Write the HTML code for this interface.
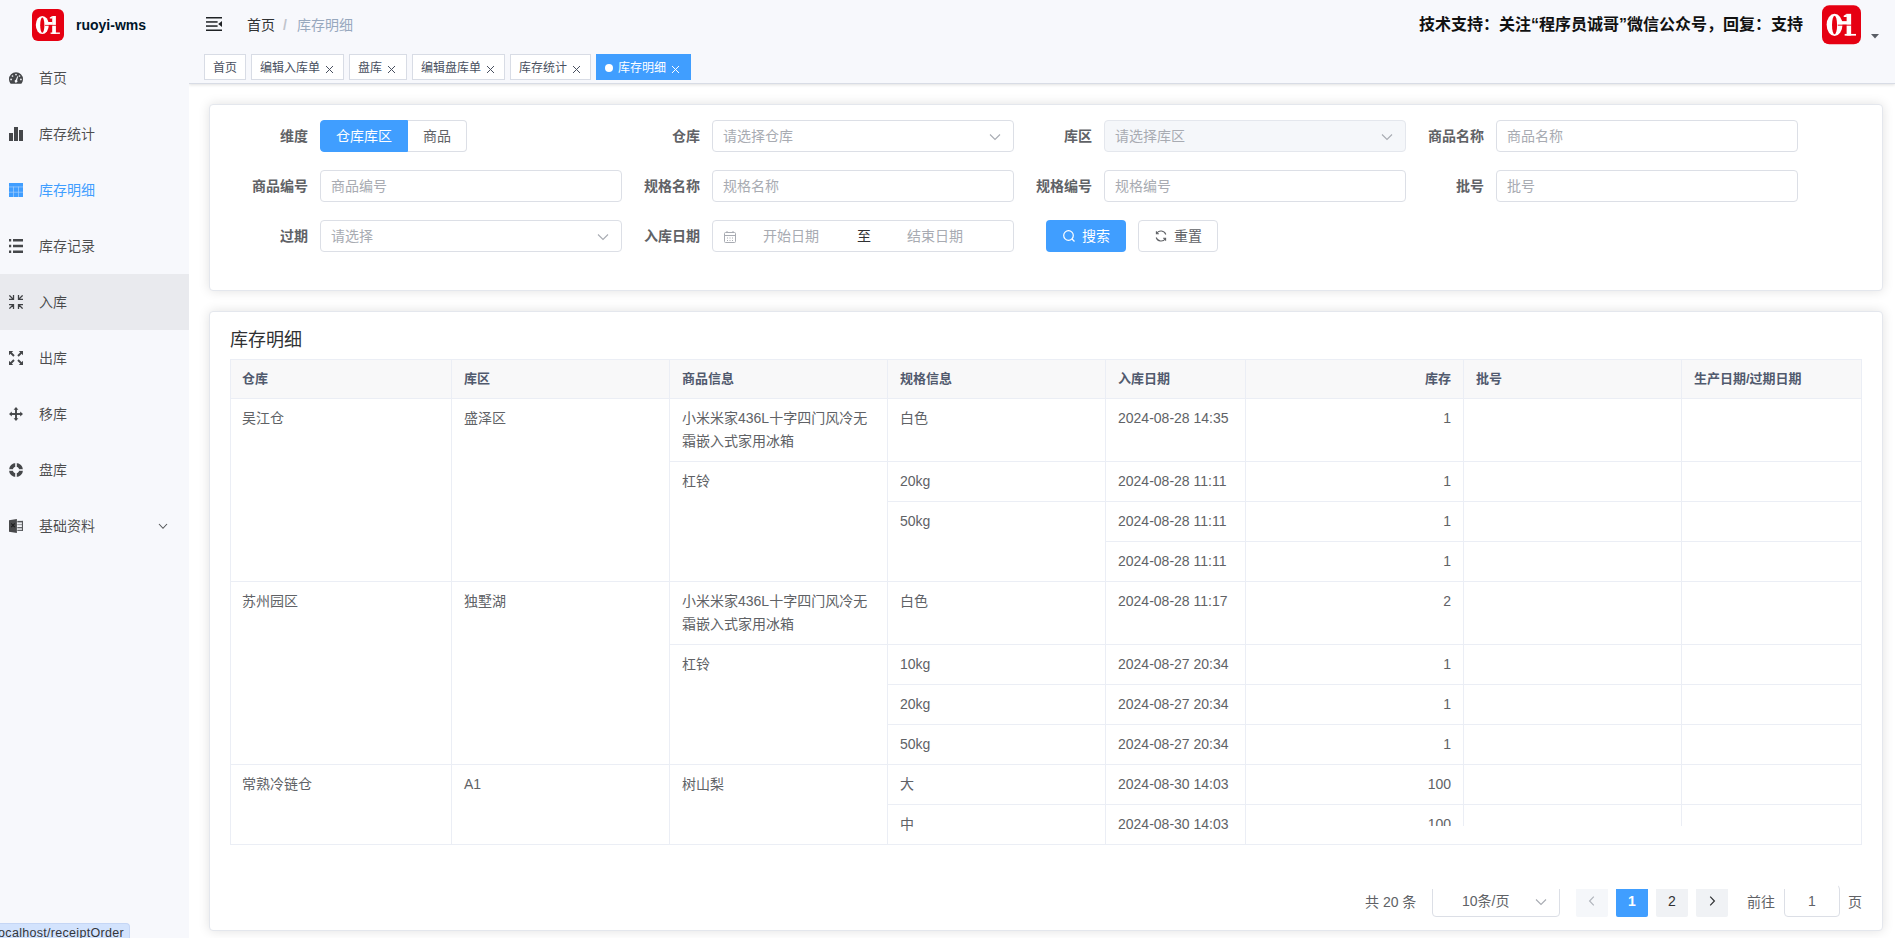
<!DOCTYPE html>
<html lang="zh-CN">
<head>
<meta charset="utf-8">
<title>ruoyi-wms</title>
<style>
*{box-sizing:border-box;margin:0;padding:0}
html,body{width:1895px;height:938px;overflow:hidden;background:#fff}
body{font-family:"Liberation Sans","Noto Sans CJK SC",sans-serif;font-size:14px;color:#606266;position:relative}
.abs{position:absolute}
#side{left:0;top:0;width:189px;height:938px;background:#f7f8fc}
#nav{left:189px;top:0;width:1706px;height:50px;background:#f7f8fc}
#tags{left:189px;top:50px;width:1706px;height:34px;background:#f7f8fc;border-bottom:1px solid #d8dce5;box-shadow:0 1px 3px 0 rgba(0,0,0,.12);clip-path:inset(0 0 -6px 0)}
.logo{left:32px;top:9px;width:32px;height:32px}
.title{left:76px;top:0;height:50px;line-height:50px;font-weight:700;font-size:14px;color:#001529;white-space:nowrap}
.mi{position:absolute;left:0;width:189px;height:56px;line-height:56px;color:rgba(0,0,0,.7);font-size:14px;white-space:nowrap}
.mi svg{position:absolute;left:9px;top:21px;width:14px;height:14px;fill:#45474a}
.mi span{position:absolute;left:39px;top:0}
.mi.act{color:#409eff}
.mi.act svg{fill:#409eff}
.mi.hov{background:#e9eaee}
.bc{top:0;height:50px;line-height:50px;font-size:14px;white-space:nowrap}
.tag{position:absolute;top:4px;height:26px;line-height:26px;border:1px solid #d8dce5;background:#fff;color:#495060;font-size:12px;padding:0 8px;white-space:nowrap}
.tag.on{background:#409eff;border-color:#409eff;color:#fff}
.tag.on:before{content:"";display:inline-block;width:8px;height:8px;border-radius:50%;background:#fff;margin-right:5px;position:relative;top:0}
.tag svg{display:inline-block;width:9px;height:9px;margin-left:5px;vertical-align:-2px;stroke:#495060;stroke-width:1;fill:none}
.tag.on svg{stroke:#fff}
.card{position:absolute;background:#fff;border:1px solid #e4e7ed;border-radius:4px;box-shadow:0 0 12px rgba(0,0,0,.12)}
.lbl{position:absolute;width:90px;height:32px;line-height:32px;text-align:right;padding-right:12px;font-weight:700;color:#606266;font-size:14px;white-space:nowrap}
.inp{position:absolute;width:302px;height:32px;border:1px solid #dcdfe6;border-radius:4px;background:#fff;line-height:30px;padding:0 10px;color:#a8abb2;font-size:14px;white-space:nowrap}
.inp.dis{background:#f5f7fa;border-color:#e4e7ed}
.chev{position:absolute;right:11px;top:9px;width:14px;height:14px;fill:none;stroke:#a8abb2;stroke-width:1.1}

.tb{position:absolute;left:20px;top:47px;width:1632px;height:486px;overflow:hidden;border-left:1px solid #ebeef5;border-top:1px solid #ebeef5}
.tb table{position:absolute;left:-1px;top:-1px;border-collapse:separate;border-spacing:0;table-layout:fixed;width:1632px}
.tb th,.tb td{border-right:1px solid #ebeef5;border-bottom:1px solid #ebeef5;padding:8px 12px;vertical-align:top;text-align:left;line-height:23px;font-size:14px;color:#606266;font-weight:400;white-space:nowrap;overflow:hidden}
.tb th{background:#f8f8f9;color:#515a6e;font-weight:700;font-size:13px;height:40px;vertical-align:middle}
.tb .r{text-align:right}
.pg{position:absolute;top:574px;height:32px;line-height:32px;font-size:14px;color:#606266;white-space:nowrap}
.pb{position:absolute;top:573px;width:32px;height:32px;line-height:32px;text-align:center;background:#f0f2f5;border-radius:2px;color:#303133;font-size:14px}
.pb svg{position:absolute;left:10px;top:10px;width:12px;height:12px;fill:none;stroke-width:1.200}
</style>
</head>
<body>
<div id="side" class="abs">
  <svg class="abs logo" viewBox="0 0 32 32"><rect width="32" height="32" rx="6" fill="#e60012"/><ellipse cx="10.300" cy="16" rx="6.500" ry="9.100" fill="#fff"/><ellipse cx="10.300" cy="16.200" rx="2.100" ry="7.600" fill="#e60012"/><rect x="15.500" y="13" width="5" height="2.900" fill="#fff"/><rect x="20.200" y="7" width="3.700" height="17.800" fill="#fff"/><path d="M17.800 9.600v-1l2.600-1.600v2.600z" fill="#fff"/><rect x="18.600" y="23.500" width="9.300" height="1.400" fill="#fff"/><rect x="13" y="15.900" width="11.200" height=".8" fill="#e60012"/></svg>
  <div class="abs title">ruoyi-wms</div>
  <div class="mi" style="top:50px"><svg viewBox="0 0 14 14"><path d="M7 1.300A7 7 0 0 0 0 8.300c0 1.400.4 2.700 1.100 3.800.2.400.5.700.9.700h10c.4 0 .7-.3.900-.7.700-1.100 1.100-2.400 1.100-3.800A7 7 0 0 0 7 1.300z"/><g fill="#f7f8fc"><circle cx="2.100" cy="8.400" r=".85"/><circle cx="3.500" cy="5" r=".85"/><circle cx="7" cy="3.600" r=".85"/><circle cx="10.500" cy="5" r=".85"/><circle cx="11.900" cy="8.400" r=".85"/><path d="M8.300 5.300l.8.300-1 3.600a1.400 1.400 0 1 1-1.300-.4z"/></g></svg><span>首页</span></div>
  <div class="mi" style="top:106px"><svg viewBox="0 0 14 14"><rect x="0" y="6" width="4" height="8"/><rect x="5" y="0" width="4" height="14"/><rect x="10" y="3" width="4" height="11"/></svg><span>库存统计</span></div>
  <div class="mi act" style="top:162px"><svg viewBox="0 0 14 14"><rect width="14" height="14"/><g fill="#f7f8fc" opacity=".55"><rect x="0" y="3.600" width="14" height=".7"/><rect x="0" y="8.800" width="14" height=".7"/><rect x="4.300" y="3.600" width=".7" height="10.400"/><rect x="9.100" y="3.600" width=".7" height="10.400"/></g></svg><span>库存明细</span></div>
  <div class="mi" style="top:218px"><svg viewBox="0 0 14 14"><rect x="0" y="0" width="2.200" height="2.500"/><rect x="4" y="0" width="10" height="2.500"/><rect x="0" y="5.750" width="2.200" height="2.500"/><rect x="4" y="5.750" width="10" height="2.500"/><rect x="0" y="11.500" width="2.200" height="2.500"/><rect x="4" y="11.500" width="10" height="2.500"/></svg><span>库存记录</span></div>
  <div class="mi hov" style="top:274px"><svg viewBox="0 0 14 14" style="fill:none;stroke:#3f4144;stroke-width:1.300"><path d="M.4.400l4 4M0 4.400h4.500V0M13.600.4l-4 4M14 4.400H9.500V0M.4 13.600l4-4M0 9.600h4.500V14M13.600 13.600l-4-4M14 9.600H9.500V14"/></svg><span>入库</span></div>
  <div class="mi" style="top:330px"><svg viewBox="0 0 14 14"><path d="M0 0h4.200L0 4.200zM14 0v4.200L9.800 0zM0 14V9.800L4.200 14zM14 14H9.800L14 9.800z"/><path d="M1.500 1.500l3.500 3.500M12.500 1.500l-3.500 3.500M1.500 12.500l3.500-3.500M12.500 12.500l-3.500-3.500" stroke="#45474a" stroke-width="1.900" fill="none"/></svg><span>出库</span></div>
  <div class="mi" style="top:386px"><svg viewBox="0 0 14 14"><path d="M7 0l2.400 2.800H4.600zM7 14l2.400-2.800H4.600zM0 7l2.800-2.400v4.800zM14 7l-2.800-2.400v4.800z"/><rect x="6.050" y="2" width="1.900" height="10"/><rect x="2" y="6.050" width="10" height="1.900"/></svg><span>移库</span></div>
  <div class="mi" style="top:442px"><svg viewBox="0 0 14 14"><circle cx="7" cy="7" r="4.950" fill="none" stroke="#45474a" stroke-width="4.100"/><rect x="6.050" y="-.5" width="1.900" height="15" fill="#dcdde1"/><rect x="-.5" y="6.050" width="15" height="1.900" fill="#dcdde1"/><circle cx="7" cy="7" r="2.900" fill="#f7f8fc"/></svg><span>盘库</span></div>
  <div class="mi" style="top:498px"><svg viewBox="0 0 14 14"><path d="M0 1.200L7.900 0v14L0 12.800z" fill="#48494b"/><path d="M2.300 4.500l3.400 3.700M5.700 4.500L2.300 8.200" stroke="#1a1a1b" stroke-width="1.100"/><g fill="#55575a"><rect x="8.300" y="1.900" width="5.700" height="1.500"/><rect x="8.300" y="4.900" width="5" height="1.300" fill="#a2a3a6"/><rect x="8.300" y="8.100" width="5" height="1.200"/><rect x="8.300" y="10.800" width="5.700" height="1.100"/><rect x="12.900" y="1.900" width="1.100" height="10"/></g></svg><span>基础资料</span><svg viewBox="0 0 12 12" style="left:157px;top:22px;width:12px;height:12px;fill:none;stroke:#55575a;stroke-width:1.100"><path d="M2 4l4 4.300L10 4"/></svg></div>
  <div class="abs" style="left:0;top:923px;width:130px;height:15px;background:#d3e3fd;border-top-right-radius:4px;border-top:1px solid #c5d6f5;border-right:1px solid #c5d6f5;overflow:hidden"><div class="abs" style="left:-5px;top:1px;font-size:12.500px;line-height:16px;color:#33363a;white-space:nowrap;letter-spacing:.3px">localhost/receiptOrder</div></div>
</div>
<div id="nav" class="abs">
  <svg class="abs" style="left:17px;top:17px;width:16px;height:14px" viewBox="0 0 16 14"><g fill="#1f2225"><rect x="0" y="0" width="16" height="1.500"/><rect x="0" y="4.200" width="11.600" height="1.500"/><rect x="0" y="8.300" width="11.600" height="1.500"/><rect x="0" y="12.500" width="16" height="1.500"/><path d="M16 4v6l-3.800-3z"/></g></svg>
  <div class="abs bc" style="left:58px;color:#303133">首页</div>
  <div class="abs bc" style="left:94px;color:#c0c4cc;font-weight:700">/</div>
  <div class="abs bc" style="left:108px;color:#97a8be">库存明细</div>
  <div class="abs" id="sup" style="left:1230px;top:0;height:50px;line-height:50px;font-size:16px;font-weight:700;color:#111;white-space:nowrap;font-family:'Liberation Sans','Noto Sans CJK SC',sans-serif">技术支持：关注“程序员诚哥”微信公众号，回复：支持</div>
  <svg class="abs" style="left:1632.500px;top:5.200px;width:39px;height:39.600px" viewBox="0 0 32 32"><rect width="32" height="32" rx="6" fill="#e60012"/><ellipse cx="10.300" cy="16" rx="6.500" ry="9.100" fill="#fff"/><ellipse cx="10.300" cy="16.200" rx="2.100" ry="7.600" fill="#e60012"/><rect x="15.500" y="13" width="5" height="2.900" fill="#fff"/><rect x="20.200" y="7" width="3.700" height="17.800" fill="#fff"/><path d="M17.800 9.600v-1l2.600-1.600v2.600z" fill="#fff"/><rect x="18.600" y="23.500" width="9.300" height="1.400" fill="#fff"/><rect x="13" y="15.900" width="11.200" height=".8" fill="#e60012"/></svg>
  <svg class="abs" style="left:1682px;top:34px;width:8px;height:5px" viewBox="0 0 8 5"><path d="M0 0h8L4 4.600z" fill="#5a5e66"/></svg>
</div>
<div id="tags" class="abs">
  <div class="tag" style="left:15px;width:42px">首页</div>
  <div class="tag" style="left:62px;width:93px">编辑入库单<svg viewBox="0 0 9 9"><path d="M1 1l7 7M8 1l-7 7"/></svg></div>
  <div class="tag" style="left:160px;width:58px">盘库<svg viewBox="0 0 9 9"><path d="M1 1l7 7M8 1l-7 7"/></svg></div>
  <div class="tag" style="left:223px;width:93px">编辑盘库单<svg viewBox="0 0 9 9"><path d="M1 1l7 7M8 1l-7 7"/></svg></div>
  <div class="tag" style="left:321px;width:81px">库存统计<svg viewBox="0 0 9 9"><path d="M1 1l7 7M8 1l-7 7"/></svg></div>
  <div class="tag on" style="left:407px;width:95px">库存明细<svg viewBox="0 0 9 9"><path d="M1 1l7 7M8 1l-7 7"/></svg></div>
</div>
<div class="card" style="left:209px;top:104px;width:1674px;height:187px">
<div class="lbl" style="left:20px;top:15px">维度</div>
<div class="abs" style="left:110px;top:15px;height:32px;width:88px;background:#409eff;border:1px solid #409eff;border-radius:4px 0 0 4px;color:#fff;line-height:30px;text-align:center;font-size:14px">仓库库区</div>
<div class="abs" style="left:198px;top:15px;height:32px;width:59px;background:#fff;border:1px solid #dcdfe6;border-left:0;border-radius:0 4px 4px 0;color:#606266;line-height:30px;text-align:center;font-size:14px">商品</div>
<div class="lbl" style="left:412px;top:15px">仓库</div><div class="inp" style="left:502px;top:15px">请选择仓库<svg class="chev" viewBox="0 0 14 14"><path d="M2 4.500l5 5 5-5"/></svg></div><div class="lbl" style="left:804px;top:15px">库区</div><div class="inp dis" style="left:894px;top:15px">请选择库区<svg class="chev" viewBox="0 0 14 14"><path d="M2 4.500l5 5 5-5"/></svg></div><div class="lbl" style="left:1196px;top:15px">商品名称</div><div class="inp" style="left:1286px;top:15px">商品名称</div>
<div class="lbl" style="left:20px;top:65px">商品编号</div><div class="inp" style="left:110px;top:65px">商品编号</div><div class="lbl" style="left:412px;top:65px">规格名称</div><div class="inp" style="left:502px;top:65px">规格名称</div><div class="lbl" style="left:804px;top:65px">规格编号</div><div class="inp" style="left:894px;top:65px">规格编号</div><div class="lbl" style="left:1196px;top:65px">批号</div><div class="inp" style="left:1286px;top:65px">批号</div>
<div class="lbl" style="left:20px;top:115px">过期</div><div class="inp" style="left:110px;top:115px">请选择<svg class="chev" viewBox="0 0 14 14"><path d="M2 4.500l5 5 5-5"/></svg></div><div class="lbl" style="left:412px;top:115px">入库日期</div>
<div class="inp" style="left:502px;top:115px;padding:0">
<svg class="abs" style="left:9.500px;top:9px;width:14px;height:14px;fill:none;stroke:#a8abb2;stroke-width:1" viewBox="0 0 14 14"><rect x="1.500" y="2.500" width="11" height="10" rx="1"/><path d="M1.500 5.500h11M4 1v2M10 1v2M4 8h1M6.500 8h1M9 8h1M4 10.500h1M6.500 10.500h1M9 10.500h1"/></svg>
<span class="abs" style="left:50px;top:0">开始日期</span><span class="abs" style="left:144px;top:0;color:#303133">至</span><span class="abs" style="left:194px;top:0">结束日期</span></div>
<div class="abs" style="left:836px;top:115px;width:80px;height:32px;border-radius:4px;background:#409eff;color:#fff;font-size:14px;line-height:32px">
<svg class="abs" style="left:16px;top:9px;width:14px;height:14px;fill:none;stroke:#fff;stroke-width:1.200" viewBox="0 0 14 14"><circle cx="6.500" cy="6.500" r="4.800"/><path d="M10 10l2.500 2.500"/></svg><span class="abs" style="left:36px;top:0">搜索</span></div>
<div class="abs" style="left:928px;top:115px;width:80px;height:32px;border-radius:4px;background:#fff;border:1px solid #dcdfe6;color:#606266;font-size:14px;line-height:30px">
<svg class="abs" style="left:15px;top:8px;width:14px;height:14px;fill:none;stroke:#606266;stroke-width:1.100" viewBox="0 0 14 14"><path d="M11.800 5.500A5 5 0 0 0 2.600 4.600M2.200 8.500a5 5 0 0 0 9.200 .9M2.400 2.300v2.500h2.500M11.600 11.700V9.200H9.100"/></svg><span class="abs" style="left:35px;top:0">重置</span></div>
</div>
<div class="card" style="left:209px;top:311px;width:1674px;height:620px">
<div class="abs" style="left:20px;top:15px;font-size:18px;line-height:26px;color:#303133;white-space:nowrap">库存明细</div>
<div class="tb"><table><colgroup><col style="width:222px"><col style="width:218px"><col style="width:218px"><col style="width:218px"><col style="width:140px"><col style="width:218px"><col style="width:218px"><col style="width:180px"></colgroup>
<tr><th>仓库</th><th>库区</th><th>商品信息</th><th>规格信息</th><th>入库日期</th><th class="r">库存</th><th>批号</th><th>生产日期/过期日期</th></tr>
<tr><td rowspan="4">吴江仓</td><td rowspan="4">盛泽区</td><td>小米米家436L十字四门风冷无<br>霜嵌入式家用冰箱</td><td>白色</td><td>2024-08-28 14:35</td><td class="r">1</td><td></td><td></td></tr>
<tr><td rowspan="3">杠铃</td><td>20kg</td><td>2024-08-28 11:11</td><td class="r">1</td><td></td><td></td></tr>
<tr><td rowspan="2">50kg</td><td>2024-08-28 11:11</td><td class="r">1</td><td></td><td></td></tr>
<tr><td>2024-08-28 11:11</td><td class="r">1</td><td></td><td></td></tr>
<tr><td rowspan="4">苏州园区</td><td rowspan="4">独墅湖</td><td>小米米家436L十字四门风冷无<br>霜嵌入式家用冰箱</td><td>白色</td><td>2024-08-28 11:17</td><td class="r">2</td><td></td><td></td></tr>
<tr><td rowspan="3">杠铃</td><td>10kg</td><td>2024-08-27 20:34</td><td class="r">1</td><td></td><td></td></tr>
<tr><td>20kg</td><td>2024-08-27 20:34</td><td class="r">1</td><td></td><td></td></tr>
<tr><td>50kg</td><td>2024-08-27 20:34</td><td class="r">1</td><td></td><td></td></tr>
<tr><td rowspan="2">常熟冷链仓</td><td rowspan="2">A1</td><td rowspan="2">树山梨</td><td>大</td><td>2024-08-30 14:03</td><td class="r">100</td><td></td><td></td></tr>
<tr><td>中</td><td>2024-08-30 14:03</td><td class="r">100</td><td></td><td></td></tr>
</table></div>
<div class="abs" style="left:1036px;top:514px;width:615px;height:18px;background:#fff"></div>
<div class="pg" style="left:1155px">共 20 条</div>
<div class="abs" style="left:1222px;top:573px;width:128px;height:32px;border:1px solid #dcdfe6;border-radius:4px;line-height:30px;font-size:14px;color:#606266"><span class="abs" style="left:29px;top:0;white-space:nowrap">10条/页</span><svg class="chev" viewBox="0 0 14 14"><path d="M2 4.500l5 5 5-5"/></svg></div>
<div class="pb" style="left:1366px;background:#f5f7fa"><svg viewBox="0 0 12 12" style="stroke:#b1b5bc"><path d="M7.800 1.700L3.600 6l4.200 4.300"/></svg></div>
<div class="pb" style="left:1406px;background:#409eff;color:#fff;font-weight:700">1</div>
<div class="pb" style="left:1446px">2</div>
<div class="pb" style="left:1486px"><svg viewBox="0 0 12 12" style="stroke:#303133"><path d="M4.200 1.700L8.400 6l-4.200 4.300"/></svg></div>
<div class="pg" style="left:1537px">前往</div>
<div class="abs" style="left:1574px;top:573px;width:56px;height:32px;border:1px solid #dcdfe6;border-radius:4px;line-height:30px;text-align:center;font-size:14px;color:#606266">1</div>
<div class="pg" style="left:1638px">页</div>
<div class="abs" style="left:1140px;top:566px;width:488px;height:11px;background:#fff"></div>
</div>
</body>
</html>
